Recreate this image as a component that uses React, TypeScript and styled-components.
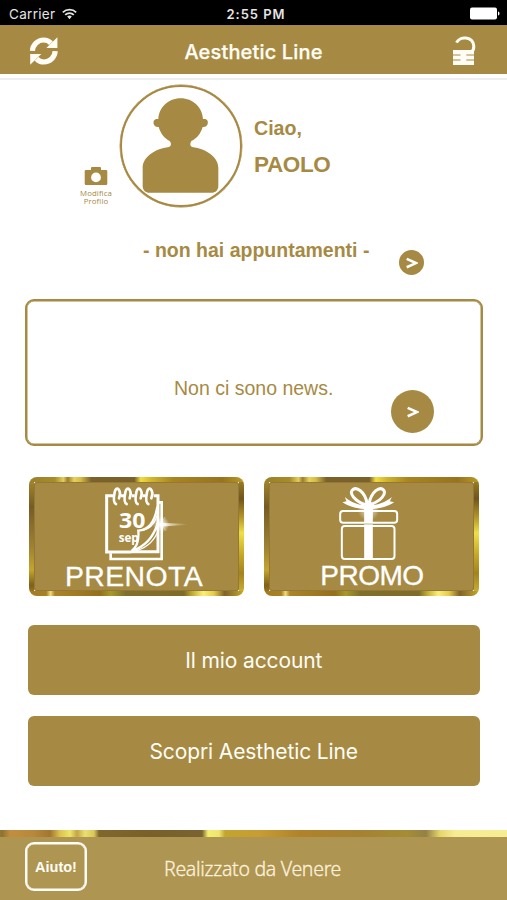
import React from 'react';
import styled, { createGlobalStyle } from 'styled-components';

const gold = '#a68a43';

const GlobalStyle = createGlobalStyle`
  * { box-sizing: border-box; }
  body { margin: 0; background: #fff; font-family: 'Liberation Sans', Arial, sans-serif; }
  svg { display: block; }
`;

const Screen = styled.div`
  width: 507px;
  height: 900px;
  display: flex;
  flex-direction: column;
  background: #fff;
  overflow: hidden;
  white-space: nowrap;
`;

const StatusBar = styled.div`
  flex: none;
  height: 25px;
  padding: 2px 7px 0 9px;
  display: grid;
  grid-template-columns: 1fr auto 1fr;
  align-items: center;
  background: #000;
  color: #e4e4e4;
  font: 400 13.5px Inter, sans-serif;
  letter-spacing: 0.3px;
`;

const Carrier = styled.div`
  display: flex;
  align-items: center;
  gap: 7px;
`;

const Clock = styled.div`
  font-weight: 600;
  font-size: 13px;
  letter-spacing: 0.95px;
  margin-left: 3px;
`;

const BatterySlot = styled.div`
  justify-self: end;
`;

const Header = styled.header`
  flex: none;
  height: 49px;
  padding: 3px 30px 0 28px;
  display: grid;
  grid-template-columns: 32px 1fr 26px;
  align-items: center;
  background: ${gold};
  color: #fffdf5;
`;

const Title = styled.h1`
  margin: 2px 4px 0 0;
  text-align: center;
  font: 500 20px Inter, sans-serif;
  letter-spacing: 0.16px;
  -webkit-text-stroke: 0.25px currentColor;
`;

const Rule = styled.div`
  flex: none;
  height: 2px;
  margin-top: 4px;
  background: #efeff1;
`;

const Profile = styled.section`
  flex: none;
  display: flex;
  height: 128px;
  padding: 5px 0 0 74px;
  color: ${gold};
`;

const EditProfile = styled.button`
  border: 0;
  background: none;
  padding: 81px 0 0;
  width: 44px;
  display: flex;
  flex-direction: column;
  align-items: center;
  color: ${gold};
  font: 400 7.8px/8px 'Open Sans', sans-serif;
  text-align: center;
`;

const EditLabel = styled.span`
  margin-top: 3px;
  letter-spacing: 0.1px;
`;

const Avatar = styled.div`
  flex: none;
  width: 122px;
  height: 122px;
  margin-left: 2px;
  border: 2px solid ${gold};
  box-shadow: 0 0 0 0.4px ${gold};
  border-radius: 50%;
  overflow: hidden;
`;

const Greeting = styled.div`
  margin: 31px 0 0 12px;
  font-weight: 700;
  font-size: 19.6px;
  line-height: 24px;
`;

const UserName = styled.div`
  margin-top: 13px;
  font-size: 22.5px;
  letter-spacing: -0.4px;
`;

const Appointments = styled.section`
  flex: none;
  display: flex;
  height: 91px;
  padding: 31px 0 0 143px;
  color: ${gold};
  font-weight: 700;
  font-size: 19.5px;
  line-height: 22px;
`;

const AppointmentText = styled.div`
  width: 256px;
`;

const RoundButton = styled.button<{ $size: number }>`
  flex: none;
  width: ${p => p.$size}px;
  height: ${p => p.$size}px;
  border: 0;
  border-radius: 50%;
  padding: 1px 0 0 1px;
  display: grid;
  place-items: center;
  background: ${gold};
  color: #fff;
`;

const AppointmentAction = styled.div`
  margin-top: 11px;
`;

const News = styled.section`
  flex: none;
  height: 147px;
  margin: 0 24px 0 25px;
  padding: 75px 0 0 147px;
  display: flex;
  border: 2px solid ${gold};
  box-shadow: inset 0 0 0 0.5px ${gold};
  border-radius: 9px;
  color: ${gold};
  font-size: 19.5px;
  line-height: 24px;
`;

const NewsText = styled.div`
  width: 217px;
`;

const NewsAction = styled.div`
  margin-top: 14px;
`;

const Tiles = styled.section`
  flex: none;
  display: grid;
  grid-template-columns: 215px 215px;
  gap: 20px;
  margin: 31px 0 0 28.5px;
`;

const Tile = styled.button<{ $nudge: number }>`
  height: 119px;
  padding: 4px 0 0;
  border: 5px solid transparent;
  border-radius: 8px;
  display: flex;
  flex-direction: column;
  align-items: center;
  color: #fff;
  background:
    linear-gradient(${gold}, ${gold}) padding-box,
    linear-gradient(90deg, #98802b 0, #a98b27 12%, #e2ce58 16%, #a07c2a 18%, #e7d259 21%, #d7bc45 24%, #7b6228 29%, #79612b 49%, #f0dd3d 52%, #d1b52c 57%, #a9841e 67%, #99731c 90%, #b99c26 100%) top / 100% 5px no-repeat border-box,
    linear-gradient(90deg, #a47b20 0, #a88026 8%, #eedc78 10%, #ad8527 12%, #94701c 33%, #a79929 38%, #7e702b 45%, #806b28 72%, #c2ad34 76%, #fbef79 81%, #e4cb4b 86%, #806326 91%, #c4aa2e 100%) bottom / 100% 5px no-repeat border-box,
    linear-gradient(180deg, #a98b2a 0, #765c24 25%, #a18332 60%, #c4a52b 78%, #806117 91%, #a98021 100%) left / 5px 100% no-repeat border-box,
    linear-gradient(180deg, #a38824 0, #71551b 18%, #b59627 34%, #efdf48 47%, #c7a926 65%, #a5831d 81%, #d2b734 100%) right / 5px 100% no-repeat border-box;
  box-shadow: inset 0 0 0 1px #92793b;

  > svg { flex: none; transform: translateX(${p => p.$nudge}px); }
`;

const TileLabel = styled.span<{ $shift: number; $size: number; $track: number }>`
  font: 400 ${p => p.$size}px/30px 'Liberation Sans', Arial, sans-serif;
  letter-spacing: ${p => p.$track}px;
  transform: translateX(${p => p.$shift}px);
  -webkit-text-stroke: 0.3px currentColor;
`;

const Links = styled.nav`
  flex: none;
  display: grid;
  gap: 21px;
  margin: 29px 27px 0 27.5px;
`;

const LinkButton = styled.button`
  height: 70px;
  padding: 0;
  border: 0;
  border-radius: 6px;
  background: ${gold};
  color: #fffdf6;
  font: 400 21px Inter, sans-serif;
  letter-spacing: -0.12px;
`;

const Footer = styled.footer`
  flex: none;
  margin-top: auto;
  height: 70px;
  background: #ae9551;
`;

const FoilStrip = styled.div`
  height: 7px;
  background: linear-gradient(90deg, #8f7a38 0, #8f7130 2px, #c18e3e 10px, #b8893b 33px, #a3762f 50px, #dcc350 60px, #eee468 70px, #c3a646 77px, #eadf70 85px, #d9c75a 94px, #80672e 99px, #796029 150px, #7a6331 202px, #f4ee70 208px, #eee573 219px, #c2a52f 225px, #c79c34 260px, #b1822a 300px, #a48233 360px, #a58c35 407px, #968045 426px, #e6d66b 440px, #f6ec94 455px, #f5ed93 507px);
`;

const FooterRow = styled.div`
  display: flex;
  align-items: flex-start;
  padding: 5px 0 0 25px;
  color: #fdf1dc;
`;

const HelpButton = styled.button`
  width: 62px;
  height: 49px;
  padding: 0;
  border: 2px solid #fffdf5;
  box-shadow: inset 0 0 0 0.5px #fffdf5;
  border-radius: 9px;
  background: none;
  color: #fffdf5;
  font: 700 14.5px 'Liberation Sans', Arial, sans-serif;
`;

const Credit = styled.div`
  margin: 14px 0 0 77px;
  font: 300 19.5px/26px 'Noto Sans', sans-serif;
  letter-spacing: -0.3px;
  -webkit-text-stroke: 0.3px currentColor;
`;

const Chevron = ({ size }: { size: number }) => (
  <svg width={size} height={size} viewBox="0 0 12 12">
    <path d="M.7 1.9 10 6.100.7 10.300" fill="none" stroke="currentColor" strokeWidth="2.600" />
  </svg>
);

const WifiIcon = () => (
  <svg width="15" height="12" viewBox="0 0 15 12" fill="none" stroke="#e4e4e4" strokeWidth="1.7">
    <path d="M.8 4.3a9.6 9.6 0 0 1 13.4 0M3.2 6.8a6.1 6.1 0 0 1 8.6 0" />
    <path d="m7.5 11.2-2.3-2.6a3.4 3.4 0 0 1 4.6 0Z" fill="#e4e4e4" stroke="none" />
  </svg>
);

const BatteryIcon = () => (
  <svg width="30" height="13" viewBox="0 0 30 13" fill="#fff">
    <rect x="0" y=".5" width="27" height="12" rx="2" />
    <path d="M28 4.5c2 .5 2 3.5 0 4Z" />
  </svg>
);

const RefreshIcon = () => (
  <svg width="30" height="30" viewBox="0 0 30 30">
    <g fill="none" stroke="currentColor" strokeWidth="5.2">
      <path d="M4.400 14.800C4.800 8.600 9.800 4 15.600 4c3.200 0 5.500 1.100 7.400 3.100" />
      <path d="M27.200 15.200C26.800 21.400 21.800 26 16 26c-3.200 0-5.500-1.100-7.400-3.100" />
    </g>
    <path d="M29.400 1.200v10.900H18.300zM2.200 28.800V17.900H13.300z" fill="currentColor" />
  </svg>
);

const LockIcon = () => (
  <svg width="26" height="30" viewBox="0 0 26 30">
    <path d="M5.500 6.700C9-.8 22 .8 22.800 10c.1 3-.8 5.100-2.800 6.300" fill="none" stroke="currentColor" strokeWidth="3" />
    <path d="M2 14h21v15H2z" fill="currentColor" />
    <path d="M2 19h7.500m5.800 0H23M2 24h7.500m5.800 0H23" stroke={gold} strokeWidth="1" />
  </svg>
);

const CameraIcon = () => (
  <svg width="24" height="20" viewBox="0 0 24 20">
    <path fill="currentColor" fillRule="evenodd" d="M8 1h8q1 0 1 1v2h5q1.300 0 1.300 1.300v12.400Q23.300 19 22 19H2Q.7 19 .7 17.700V5.300Q.7 4 2 4h5V2q0-1 1-1Zm4 5.500a4.900 4.900 0 1 0 0 9.800 4.900 4.900 0 0 0 0-9.800Z" />
  </svg>
);

const PersonIcon = () => (
  <svg width="119" height="119" viewBox="2 2 357 357" fill="currentColor">
    <path d="M178 36c37 0 65 27 67 62 13-2 16 6 14 15-2 7-8 10-15 9-6 20-17 34-34 42-5 8-4 15 2 18 45 6 79 31 79 63v53c0 13-8 21-21 21H85c-13 0-21-8-21-21v-53c0-32 34-57 79-63 7-3 8-10 2-18-16-8-27-22-33-42-7 1-13-2-15-9-2-9 2-17 14-15 2-35 30-62 67-62Z" />
  </svg>
);

const CalendarIcon = () => (
  <svg width="87" height="75" viewBox="250 45 261 225" fill="none" stroke="#fff">
    <defs>
      <linearGradient id="ray"><stop offset="0" stopColor="#fff" /><stop offset="1" stopColor="#fff" stopOpacity="0" /></linearGradient>
      <radialGradient id="glow"><stop offset="0" stopColor="#fff" /><stop offset=".35" stopColor="#fff" stopOpacity=".7" /><stop offset="1" stopColor="#fff" stopOpacity="0" /></radialGradient>
    </defs>
    <path d="M281 74H261V243H335M402 74h13V242H335M303 74h10M336 74h9M368 74h10" strokeWidth="9" />
    <path d="M273 247v17H426V94H416" strokeWidth="8" />
    {[291, 323, 356, 388].map(x => (
      <path key={x} d={`M${x + 7} 82c9-27-9-40-13-18-4 20-4 32 4 35`} strokeWidth="8" strokeLinecap="round" />
    ))}
    <g fill="#fff" stroke="none" fontFamily="Open Sans, sans-serif" fontWeight="700">
      <text x="298" y="171" fontSize="64" textLength="79" lengthAdjust="spacingAndGlyphs">30</text>
      <text x="297" y="214" fontSize="35" textLength="60" lengthAdjust="spacingAndGlyphs">sep</text>
    </g>
    <path d="M413 107c-7 43-23 70-57 72 2 25-2 48-20 61 43-14 67-47 78-83" strokeWidth="7" />
    <path d="M363 178c31-2 43-23 50-46M343 240c35-7 56-25 70-55" strokeWidth="4" />
    <circle cx="424" cy="160" r="25" fill="url(#glow)" stroke="none" />
    <path d="M420 155l82 4v2l-82 6Z" fill="url(#ray)" stroke="none" />
    <path d="m407 140 33 40m-33 0 30-42" strokeWidth="2" opacity=".5" />
  </svg>
);

const GiftIcon = () => (
  <svg width="61" height="75" viewBox="245 44 183 225" fill="none" stroke="#fff">
    <defs>
      <radialGradient id="spark"><stop offset="0" stopColor="#fff" stopOpacity=".8" /><stop offset="1" stopColor="#fff" stopOpacity="0" /></radialGradient>
    </defs>
    <rect x="250" y="119" width="171" height="35" rx="9" strokeWidth="6" />
    <rect x="255" y="164" width="158" height="99" rx="9" strokeWidth="6" />
    <path d="M322 105h26v158h-26z" fill="#fff" stroke="none" />
    <path d="M322 158h26" stroke={gold} strokeWidth="2" />
    <path d="M326 101c-34-14-48-34-40-44 12-14 39 4 45 40m9 3c34-12 48-32 41-43-12-14-37 3-45 41" strokeWidth="9" />
    <path d="M325 113c-29-1-49-8-68-20l12-3-5-13c19 16 40 24 64 25Zm18 0c29-1 50-8 69-20l-13-3 6-13c-20 16-41 24-65 25Z" fill="#fff" stroke="none" />
    <ellipse cx="335" cy="105" rx="17" ry="14" fill="#fff" stroke="none" />
    <circle cx="335" cy="116" r="33" fill="url(#spark)" stroke="none" />
  </svg>
);

export default function App() {
  return (
    <>
      <GlobalStyle />
      <Screen>
        <StatusBar>
          <Carrier>Carrier <WifiIcon /></Carrier>
          <Clock>2:55 PM</Clock>
          <BatterySlot><BatteryIcon /></BatterySlot>
        </StatusBar>
        <Header>
          <RefreshIcon />
          <Title>Aesthetic Line</Title>
          <LockIcon />
        </Header>
        <Rule />
        <Profile>
          <EditProfile>
            <CameraIcon />
            <EditLabel>Modifica<br />Profilo</EditLabel>
          </EditProfile>
          <Avatar><PersonIcon /></Avatar>
          <Greeting>
            Ciao,
            <UserName>PAOLO</UserName>
          </Greeting>
        </Profile>
        <Appointments>
          <AppointmentText>- non hai appuntamenti -</AppointmentText>
          <AppointmentAction>
            <RoundButton $size={25}><Chevron size={12} /></RoundButton>
          </AppointmentAction>
        </Appointments>
        <News>
          <NewsText>Non ci sono news.</NewsText>
          <NewsAction>
            <RoundButton $size={43}><Chevron size={12} /></RoundButton>
          </NewsAction>
        </News>
        <Tiles>
          <Tile $nudge={10}>
            <CalendarIcon />
            <TileLabel $shift={-2} $size={28.4} $track={0.4}>PRENOTA</TileLabel>
          </Tile>
          <Tile $nudge={-2.5}>
            <GiftIcon />
            <TileLabel $shift={1} $size={28} $track={-0.5}>PROMO</TileLabel>
          </Tile>
        </Tiles>
        <Links>
          <LinkButton>Il mio account</LinkButton>
          <LinkButton>Scopri Aesthetic Line</LinkButton>
        </Links>
        <Footer>
          <FoilStrip />
          <FooterRow>
            <HelpButton>Aiuto!</HelpButton>
            <Credit>Realizzato da Venere</Credit>
          </FooterRow>
        </Footer>
      </Screen>
    </>
  );
}
